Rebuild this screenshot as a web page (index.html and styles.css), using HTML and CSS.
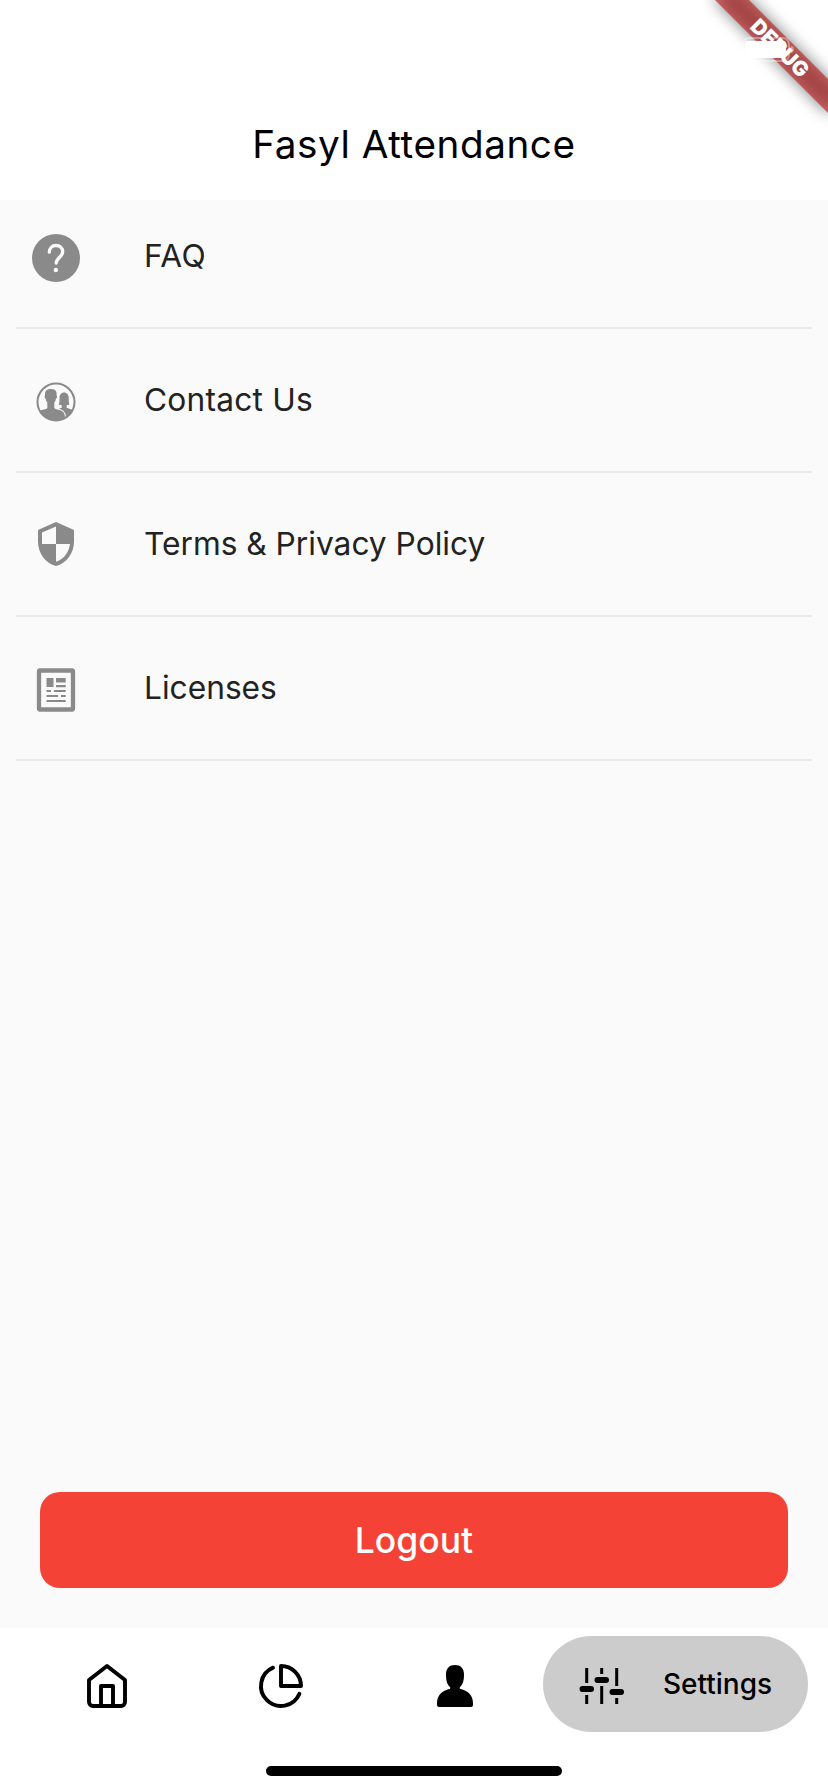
FILE: index.html
```html
<!DOCTYPE html>
<html lang="en">
<head>
<meta charset="utf-8">
<title>Fasyl Attendance</title>
<link rel="stylesheet" href="styles.css">
</head>
<body>
<div class="screen">
  <header class="header"><h1 class="title">Fasyl Attendance</h1></header>

  <main class="content">
    <ul class="menu">
      <li class="row">
        <svg class="row-icon" viewBox="0 0 48 48"><circle cx="24" cy="24" r="24" fill="#8a8a8a"/><path d="M17.300 18.200c0-4 2.900-6.700 6.700-6.700s6.700 2.600 6.700 6.200c0 5.200-6.500 6.300-6.500 11.300" fill="none" stroke="#fafafa" stroke-width="3.300" stroke-linecap="round"/><circle cx="23.800" cy="36" r="2.200" fill="#fafafa"/></svg>
        <span class="row-label faq">FAQ</span>
      </li>
      <li class="row">
        <svg class="row-icon" viewBox="0 0 48 48"><defs><clipPath id="disc"><circle cx="24" cy="24" r="18.500"/></clipPath></defs><g clip-path="url(#disc)" fill="#8a8a8a"><path d="M26 46V31l3.700-1.200v-2.600c-1.300 0-2.400-.3-3-.9 1-1.500.7-3.500.8-6 0-3.600 1.700-5.800 4.600-5.800s4.600 2.200 4.600 5.800c.1 2.500-.1 4.500.9 6-.8.600-1.800.9-3 .9v2.600l6.400 2.200V46z"/><path d="M2 35.500l6-3c4-1.200 6.800-1.300 7.300-2.500v-5.500c-1-1-1.400-2.300-1.600-3.700-1.200-.5-1.500-3-.6-3.600-.8-4 1.400-6.300 5.700-6.200 4.500-.1 6.500 2.200 5.700 6.200.9.600.6 3.100-.6 3.600-.2 1.400-.6 2.700-1.600 3.700V30c.8 1.500 3 1.400 5.900 2.300 3.700 1.200 4.800 3.500 4.800 8.700v5H2z" stroke="#fafafa" stroke-width="2.400" paint-order="stroke"/></g><circle cx="24" cy="24" r="18.500" fill="none" stroke="#8a8a8a" stroke-width="2"/></svg>
        <span class="row-label contact">Contact Us</span>
      </li>
      <li class="row">
        <svg class="row-icon" viewBox="0 0 48 48"><path fill="#8a8a8a" fill-rule="evenodd" d="M24 0L6 8v12c0 11.100 7.680 21.480 18 24 10.320-2.520 18-12.900 18-24V8zM24 21.980h14c-1.060 8.240-6.560 15.580-14 17.880V22H10V10.600l14-6.220z"/></svg>
        <span class="row-label terms">Terms &amp; Privacy Policy</span>
      </li>
      <li class="row">
        <svg class="row-icon" viewBox="0 0 48 48"><rect x="7" y="4.500" width="34" height="39" rx="1" fill="none" stroke="#8a8a8a" stroke-width="4.300"/><g fill="#8a8a8a"><path d="M14.500 12h7v9h-7zM24 12h9.700v4.500H24zM24 19h9.700v2.200H24zM14.500 24h4.600v2h-4.600zM22 24h11.700v2H22zM14.500 29h11.700v2H14.500zM29 29h4.700v2H29zM14.500 34h19.200v2H14.500z"/></g></svg>
        <span class="row-label licenses">Licenses</span>
      </li>
    </ul>
    <button class="logout" type="button"><span class="logout-text">Logout</span></button>
  </main>

  <nav class="nav">
    <div class="tabs">
      <svg class="tab" viewBox="0 0 48 48" fill="none" stroke="#000" stroke-width="3.900" stroke-linejoin="round"><path d="M6 18L24 4l18 14v22a4 4 0 0 1-4 4H10a4 4 0 0 1-4-4z"/><path d="M18 44V24h12v20"/></svg>
      <svg class="tab" viewBox="0 0 48 48" fill="none" stroke="#000" stroke-width="3.900" stroke-linejoin="round" stroke-linecap="round"><path d="M42.420 31.780A20 20 0 1 1 16.020 5.660"/><path d="M44 24A20 20 0 0 0 24 4v20z"/></svg>
      <svg class="tab" viewBox="0 0 48 48"><path d="M24 3c5.500 0 9 3.200 9 9.500 0 7-1.500 10.500-4.200 12.700v1.600C36 28.500 42 32.500 42 41v2q0 2-2 2H8q-2 0-2-2v-2c0-8.500 6-12.500 13.200-14.200v-1.600C16.500 23 15 19.500 15 12.500 15 6.200 18.500 3 24 3z"/></svg>
      <div class="active">
        <svg class="tab-settings" viewBox="0 0 48 40"><path d="M7.700 2v15M7.700 29v9M22.700 2v6M22.700 20v18M37.700 2v18M37.700 32v6" stroke="#000" stroke-width="3"/><path d="M3.500 23h8.500M18.500 14h8.500M33.500 26h8.500" stroke="#000" stroke-width="6" stroke-linecap="round"/></svg>
        <span class="active-label">Settings</span>
      </div>
    </div>
    <div class="home-indicator"></div>
  </nav>

  <svg class="debug" viewBox="0 0 140 130">
    <defs><filter id="soft" x="-50%" y="-300%" width="200%" height="700%"><feGaussianBlur stdDeviation="7.900"/></filter></defs>
    <g transform="translate(92 48) rotate(45)">
      <rect x="-80" y="-12" width="160" height="24" opacity=".5" filter="url(#soft)"/>
      <rect x="-80" y="-12" width="160" height="24" fill="#b71c1c" fill-opacity=".627"/>
      <text class="debug-text" x="0" y="7.500" text-anchor="middle">DEBUG</text>
    </g>
    <rect x="55" y="38" width="46" height="23" rx="6" fill="none" stroke="#fff" stroke-opacity=".35" stroke-width="2"/>
    <rect x="57" y="41" width="41" height="17" rx="3" fill="#fff"/>
    <path d="M103 45.500q3 1.200 3 4t-3 4z" fill="#fff" fill-opacity=".4"/>
  </svg>
</div>
</body>
</html>
```
FILE: styles.css
```css
body { margin: 0; font-family: Inter, "Liberation Sans", sans-serif; color: #222; }
.screen { position: relative; width: 828px; height: 1792px; display: flex; flex-direction: column; overflow: hidden; background: #fafafa; }
.header { height: 200px; box-sizing: border-box; padding-top: 88px; background: #fff; }
.title { margin: 0; text-align: center; font-size: 38.7px; line-height: 112px; font-weight: 400; letter-spacing: .55px; color: #000; }
.content { flex: 1; display: flex; flex-direction: column; justify-content: space-between; }
.menu { list-style: none; margin: 0; padding: 0 16px; }
.row { display: flex; align-items: center; gap: 64px; height: 142px; padding-left: 16px; border-bottom: 2px solid #e9e9e9; }
.row:first-child { height: 127px; }
.row-icon { width: 48px; height: 48px; flex: none; margin-top: 4px; }
.row:first-child .row-icon { margin-top: -11px; }
.row:first-child .row-label { margin-top: -16px; }
.row-label { font-size: 31.7px; line-height: 40px; font-weight: 400; white-space: nowrap; }
.faq { letter-spacing: .4px; }
.contact { letter-spacing: .2px; }
.terms { letter-spacing: 0; }
.licenses { letter-spacing: 0; }
.logout { margin: 0 40px 40px; height: 96px; border: 0; border-radius: 20px; background: #f44336; color: #fff; font: 500 35.5px/96px Inter, "Liberation Sans", sans-serif; padding: 1px 0 0; }
.nav { height: 164px; background: #fff; display: flex; flex-direction: column; align-items: center; }
.tabs { align-self: stretch; height: 96px; margin-top: 8px; padding: 0 20px 0 83px; display: flex; align-items: center; }
.tab { width: 48px; height: 48px; flex: none; margin: 4px 126px 0 0; }
.tab:nth-child(3) { margin-right: 64px; }
.active { display: flex; align-items: center; width: 265px; height: 96px; box-sizing: border-box; padding-left: 36px; gap: 36px; border-radius: 48px; background: #ccc; }
.tab-settings { width: 48px; height: 40px; flex: none; margin-top: 4px; }
.active-label { font-size: 28px; font-weight: 500; line-height: 40px; color: #000; }
.home-indicator { width: 296px; height: 10px; border-radius: 5px; background: #000; margin-top: 34px; }
.debug { position: absolute; top: 0; right: 0; width: 140px; height: 130px; }
.debug-text { font: 900 20.8px Inter, "Liberation Sans", sans-serif; fill: #fff; }
```
